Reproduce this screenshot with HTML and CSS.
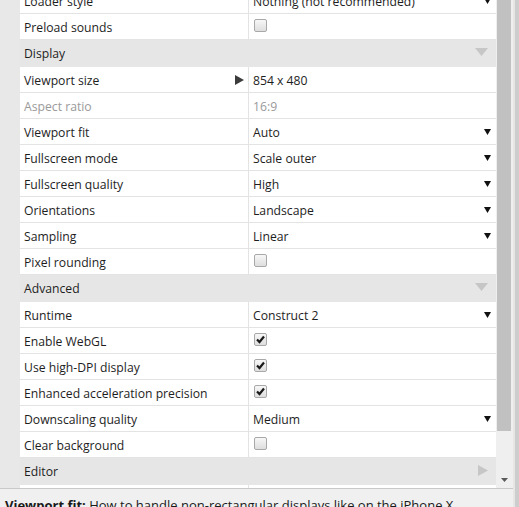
FILE: index.html
```html
<!DOCTYPE html>
<html>
<head>
<meta charset="utf-8">
<link rel="stylesheet" href="styles.css">
</head>
<body>
<div class="app">
  <div class="content">
    <div class="main">
      <div class="grid">
        <div class="rows">
          <div class="row"><div class="label">Loader style</div><div class="value dd">Nothing (not recommended)<svg class="ddarrow" width="7" height="6" viewBox="0 0 7 6"><path d="M0 0H7L3.5 6Z"/></svg></div></div>
          <div class="row"><div class="label">Preload sounds</div><div class="value"><span class="cb"></span></div></div>
          <div class="section"><span>Display</span><svg class="sarrow" width="13" height="8" viewBox="0 0 13 8"><path d="M0 0H13L6.5 8Z"/></svg></div>
          <div class="row"><div class="label lbl-arrow">Viewport size<svg class="play" width="9" height="10" viewBox="0 0 9 10"><path d="M0 0L9 5L0 10Z"/></svg></div><div class="value">854 x 480</div></div>
          <div class="row dim"><div class="label">Aspect ratio</div><div class="value">16:9</div></div>
          <div class="row"><div class="label">Viewport fit</div><div class="value dd">Auto<svg class="ddarrow" width="7" height="6" viewBox="0 0 7 6"><path d="M0 0H7L3.5 6Z"/></svg></div></div>
          <div class="row"><div class="label">Fullscreen mode</div><div class="value dd">Scale outer<svg class="ddarrow" width="7" height="6" viewBox="0 0 7 6"><path d="M0 0H7L3.5 6Z"/></svg></div></div>
          <div class="row"><div class="label">Fullscreen quality</div><div class="value dd">High<svg class="ddarrow" width="7" height="6" viewBox="0 0 7 6"><path d="M0 0H7L3.5 6Z"/></svg></div></div>
          <div class="row"><div class="label">Orientations</div><div class="value dd">Landscape<svg class="ddarrow" width="7" height="6" viewBox="0 0 7 6"><path d="M0 0H7L3.5 6Z"/></svg></div></div>
          <div class="row"><div class="label">Sampling</div><div class="value dd">Linear<svg class="ddarrow" width="7" height="6" viewBox="0 0 7 6"><path d="M0 0H7L3.5 6Z"/></svg></div></div>
          <div class="row"><div class="label">Pixel rounding</div><div class="value"><span class="cb"></span></div></div>
          <div class="section"><span>Advanced</span><svg class="sarrow" width="13" height="8" viewBox="0 0 13 8"><path d="M0 0H13L6.5 8Z"/></svg></div>
          <div class="row"><div class="label">Runtime</div><div class="value dd">Construct 2<svg class="ddarrow" width="7" height="6" viewBox="0 0 7 6"><path d="M0 0H7L3.5 6Z"/></svg></div></div>
          <div class="row"><div class="label">Enable WebGL</div><div class="value"><span class="cb"><svg width="11" height="11" viewBox="0 0 11 11"><path d="M2 5.5L4.5 8L9 2.5"/></svg></span></div></div>
          <div class="row"><div class="label">Use high-DPI display</div><div class="value"><span class="cb"><svg width="11" height="11" viewBox="0 0 11 11"><path d="M2 5.5L4.5 8L9 2.5"/></svg></span></div></div>
          <div class="row"><div class="label">Enhanced acceleration precision</div><div class="value"><span class="cb"><svg width="11" height="11" viewBox="0 0 11 11"><path d="M2 5.5L4.5 8L9 2.5"/></svg></span></div></div>
          <div class="row"><div class="label">Downscaling quality</div><div class="value dd">Medium<svg class="ddarrow" width="7" height="6" viewBox="0 0 7 6"><path d="M0 0H7L3.5 6Z"/></svg></div></div>
          <div class="row"><div class="label">Clear background</div><div class="value"><span class="cb"></span></div></div>
          <div class="section"><span>Editor</span><svg class="sarrow" width="10" height="11" viewBox="0 0 10 11"><path d="M0 0L10 5.5L0 11Z"/></svg></div>
          <div class="row"><div class="label">Snap to grid</div><div class="value"><span class="cb"></span></div></div>
        </div>
      </div>
      <div class="scrollbar">
        <div class="thumb"></div>
        <svg class="sbarrow" width="7" height="4" viewBox="0 0 7 4"><path d="M0 0H7L3.5 4Z"/></svg>
      </div>
    </div>
    <div class="help"><b>Viewport fit:</b> How to handle non-rectangular displays like on the iPhone X.</div>
  </div>
  <div class="edge"></div>
</div>
</body>
</html>
```

FILE: styles.css
```css
html, body {
  margin: 0;
  padding: 0;
}
body {
  font-family: "Open Sans", "Noto Sans", "Liberation Sans", sans-serif;
  font-size: 12.2px;
  color: #1e1e1e;
  overflow: hidden;
  background: #e8e8e8;
}
.app {
  display: flex;
  width: 519px;
  height: 507px;
}
.content {
  display: flex;
  flex-direction: column;
  width: 513px;
}
.edge {
  width: 6px;
  background: #cdcdcd;
  border-left: 2px solid #e6e6e6;
  box-sizing: border-box;
}
.main {
  display: flex;
  height: 488px;
  padding-left: 20px;
  background: #e8e8e8;
  overflow: hidden;
}
.grid {
  width: 476px;
  overflow: hidden;
}
.rows {
  margin-top: -12px;
}
.row {
  display: flex;
  height: 25px;
  border-bottom: 1px solid #e3e3e3;
  background: #fff;
  line-height: 23px;
}
.label {
  width: 224px;
  padding-left: 4px;
  padding-top: 2px;
  border-right: 1px solid #e3e3e3;
  display: flex;
  align-items: center;
  white-space: nowrap;
}
.value {
  flex: 1;
  padding-left: 4px;
  padding-right: 5px;
  padding-top: 2px;
  display: flex;
  align-items: center;
  white-space: nowrap;
}
.dim .label, .dim .value {
  color: #9a9a9a;
}
.lbl-arrow {
  justify-content: space-between;
  padding-right: 4px;
  width: 220px;
}
.play {
  margin-top: -1px;
}
.play path {
  fill: #3c3c3c;
}
.dd {
  justify-content: space-between;
}
.ddarrow {
  margin-top: -2px;
}
.ddarrow path {
  fill: #111;
}
.section {
  height: 27px;
  background: #e6e6e6;
  display: flex;
  align-items: center;
  justify-content: space-between;
  padding: 0 8px 0 4px;
}
.section .sarrow {
  margin-top: -3px;
}
.sarrow path {
  fill: #c6c6c6;
}
.cb {
  display: block;
  width: 13px;
  height: 13px;
  box-sizing: border-box;
  border: 1px solid #a8a8a8;
  border-radius: 2px;
  background: linear-gradient(#f7f7f7, #dedede);
  margin-top: -5px;
  margin-left: 1px;
  position: relative;
}
.cb svg {
  position: absolute;
  left: 0;
  top: 0;
}
.cb path {
  fill: none;
  stroke: #1a1a1a;
  stroke-width: 2.2;
}
.scrollbar {
  width: 17px;
  background: #efefef;
  display: flex;
  flex-direction: column;
  align-items: flex-start;
}
.thumb {
  width: 14px;
  height: 431px;
  margin-left: 1px;
  background: #c1c1c1;
}
.sbarrow {
  margin-top: 47px;
  margin-left: 5px;
}
.sbarrow path {
  fill: #5a5a5a;
}
.help {
  flex: 1;
  border-top: 1px solid #c9c9c9;
  background: #f0f0f0;
  padding: 7px 5px 0;
  font-size: 13px;
  line-height: 18px;
  white-space: nowrap;
  overflow: hidden;
  color: #1a1a1a;
}
.help b {
  font-weight: 700;
}
```
